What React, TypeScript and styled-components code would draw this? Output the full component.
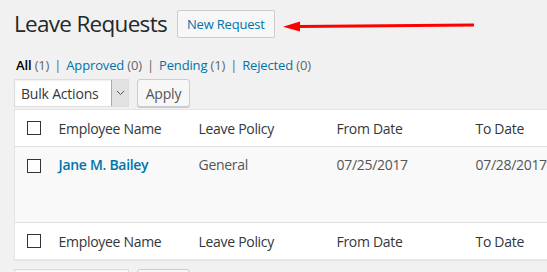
import React from "react";
import styled, { createGlobalStyle } from "styled-components";

const GlobalStyle = createGlobalStyle`
  html, body {
    margin: 0;
    padding: 0;
    background: #f1f1f1;
    overflow: hidden;
  }
  body {
    font-family: "Open Sans", "Noto Sans", sans-serif;
    color: #444;
    font-size: 13px;
  }
`;

const Wrap = styled.div`
  position: relative;
  width: 760px;
  padding: 10px 0 0 14px;
`;

const HeadingRow = styled.div`
  display: flex;
  align-items: center;
  gap: 10px;
  height: 28px;
`;

const Title = styled.h1`
  margin: 0;
  font-size: 22.5px;
  font-weight: 400;
  color: #23282d;
  line-height: 28px;
  letter-spacing: -0.7px;
`;

const AddNew = styled.a`
  display: inline-flex;
  align-items: center;
  box-sizing: border-box;
  height: 28px;
  padding: 0 9px;
  border: 1px solid #ccc;
  border-radius: 2px;
  background: #f7f7f7;
  color: #0073aa;
  font-size: 13px;
  text-decoration: none;
  letter-spacing: -0.2px;
`;

const Arrow = styled.svg`
  position: absolute;
  left: 0;
  top: 0;
  pointer-events: none;
`;

const Filters = styled.ul`
  display: flex;
  margin: 18px 0 0 2px;
  padding: 0;
  list-style: none;
  font-size: 13px;
  line-height: 18px;
  color: #666;
  letter-spacing: -0.15px;
`;

const FilterItem = styled.li<{ $current?: boolean }>`
  color: #666;
  & a {
    color: ${(p) => (p.$current ? "#000" : "#0073aa")};
    font-weight: ${(p) => (p.$current ? 600 : 400)};
    text-decoration: none;
  }
`;

const Sep = styled.span`
  margin: 0 5px;
  color: #666;
`;

const TableNav = styled.div<{ $top: number }>`
  display: flex;
  gap: 8px;
  margin-top: ${(p) => p.$top}px;
  height: 30px;
  align-items: flex-start;
`;

const SelectBox = styled.div`
  position: relative;
  box-sizing: border-box;
  width: 115px;
  height: 28px;
  border: 1px solid #ddd;
  background: #fff;
  display: flex;
  align-items: center;
  padding-left: 6px;
  font-size: 14px;
  color: #32373c;
  box-shadow: inset 0 1px 2px rgba(0, 0, 0, 0.07);
  letter-spacing: -0.2px;
`;

const SelectArrow = styled.span`
  position: absolute;
  right: 0;
  top: 0;
  bottom: 0;
  width: 16px;
  background: #e1e1e1;
  border-left: 1px solid #aaa;
  display: flex;
  align-items: center;
  justify-content: center;
`;

const Button = styled.button`
  box-sizing: border-box;
  height: 28px;
  width: 53px;
  padding: 0;
  border: 1px solid #ccc;
  border-radius: 3px;
  background: #f7f7f7;
  box-shadow: 0 1px 0 #ccc;
  color: #555;
  font-family: inherit;
  font-size: 14px;
  letter-spacing: -0.2px;
`;

const Table = styled.table`
  width: 740px;
  border-collapse: collapse;
  background: #fff;
  border: 1px solid #e5e5e5;
  box-shadow: 0 1px 1px rgba(0, 0, 0, 0.04);
  table-layout: fixed;
  font-size: 14px;
  color: #32373c;
  letter-spacing: -0.3px;
`;

const Th = styled.th`
  text-align: left;
  font-weight: 400;
  padding: 0 10px;
  height: 36px;
  color: #32373c;
`;

const CheckCell = styled.td<{ $middle?: boolean }>`
  padding: 0 0 0 12px;
  vertical-align: ${(p) => (p.$middle ? "middle" : "top")};
`;

const Head = styled.thead`
  & tr {
    border-bottom: 1px solid #e1e1e1;
  }
`;

const Foot = styled.tfoot`
  & tr {
    border-top: 1px solid #e1e1e1;
  }
`;

const Row = styled.tr`
  background: #f9f9f9;
  height: 76px;
`;

const Td = styled.td`
  padding: 8px 10px;
  vertical-align: top;
  color: #555;
  line-height: 20px;
`;

const Check = styled.span<{ $top: number }>`
  display: block;
  box-sizing: border-box;
  width: 14px;
  height: 14px;
  margin-top: ${(p) => p.$top}px;
  border: 1.5px solid #333;
  background: #fff;
`;

const NameLink = styled.a`
  color: #0073aa;
  font-weight: 600;
  text-decoration: none;
`;

const HeaderCells = () => (
  <tr>
    <CheckCell $middle>
      <Check $top={0} />
    </CheckCell>
    <Th>Employee Name</Th>
    <Th>Leave Policy</Th>
    <Th>From Date</Th>
    <Th>To Date</Th>
  </tr>
);

const Caret = () => (
  <svg width="9" height="6" viewBox="0 0 9 6">
    <path d="M1 1l3.5 3.5L8 1" fill="none" stroke="#555" strokeWidth="1" />
  </svg>
);

export default function App() {
  return (
    <>
      <GlobalStyle />
      <Wrap>
        <HeadingRow>
          <Title>Leave Requests</Title>
          <AddNew href="#">New Request</AddNew>
        </HeadingRow>
        <Filters>
          <FilterItem $current>
            <a href="#">All</a> (1)
          </FilterItem>
          <Sep>|</Sep>
          <FilterItem>
            <a href="#">Approved</a> (0)
          </FilterItem>
          <Sep>|</Sep>
          <FilterItem>
            <a href="#">Pending</a> (1)
          </FilterItem>
          <Sep>|</Sep>
          <FilterItem>
            <a href="#">Rejected</a> (0)
          </FilterItem>
        </Filters>
        <TableNav $top={5}>
          <SelectBox>
            Bulk Actions
            <SelectArrow>
              <Caret />
            </SelectArrow>
          </SelectBox>
          <Button>Apply</Button>
        </TableNav>
        <Table>
          <colgroup>
            <col style={{ width: 34 }} />
            <col style={{ width: 140 }} />
            <col style={{ width: 138 }} />
            <col style={{ width: 139 }} />
            <col />
          </colgroup>
          <Head>
            <HeaderCells />
          </Head>
          <tbody>
            <Row>
              <CheckCell>
                <Check $top={12} />
              </CheckCell>
              <Td>
                <NameLink href="#">Jane M. Bailey</NameLink>
              </Td>
              <Td>General</Td>
              <Td>07/25/2017</Td>
              <Td>07/28/2017</Td>
            </Row>
          </tbody>
          <Foot>
            <HeaderCells />
          </Foot>
        </Table>
        <TableNav $top={9}>
          <SelectBox />
          <Button />
        </TableNav>
        <Arrow width="547" height="60" viewBox="0 0 547 60">
          <path d="M298 26.6 L474 25" stroke="#f00" strokeWidth="3" fill="none" />
          <path d="M283 26.7 L300 21.5 L300 31.5 Z" fill="#f00" />
        </Arrow>
      </Wrap>
    </>
  );
}
